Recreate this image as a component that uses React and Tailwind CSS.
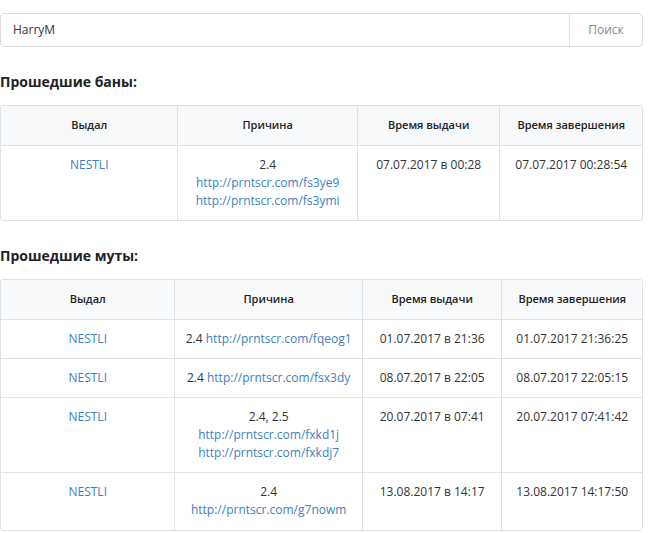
const F = { fontFamily: '"Open Sans", "Noto Sans", sans-serif' };
const L = ({ children }) => <span className="text-[#3c7fc1]">{children}</span>;

function Table({ cols, rows }) {
  return (
    <div className="mr-[9px] border border-[#dee2e6] rounded-[3px] overflow-hidden">
      <div className="flex bg-[#f8f9fa] h-[40px] items-center text-[11px] font-semibold text-[#222] border-b border-[#dee2e6]">
        {["Выдал", "Причина", "Время выдачи", "Время завершения"].map((h, i) => (
          <div key={i} style={{ width: cols[i] }} className={"h-full flex items-center justify-center " + (i < 3 ? "border-r border-[#dee2e6]" : "")}>{h}</div>
        ))}
      </div>
      {rows.map((r, ri) => (
        <div key={ri} style={{ height: r.h }} className={"flex text-[12px] leading-[18px] text-[#333] " + (ri < rows.length - 1 ? "border-b border-[#dee2e6]" : "")}>
          {r.c.map((c, i) => (
            <div key={i} style={{ width: cols[i] }} className={"pt-[10px] text-center " + (i < 3 ? "border-r border-[#dee2e6]" : "")}>{c}</div>
          ))}
        </div>
      ))}
    </div>
  );
}

export default function App() {
  return (
    <div style={F} className="w-[652px] h-[533px] bg-white overflow-hidden pt-[13px]">
      <div className="mr-[9px] h-[34px] flex border border-[#dcdcdc] rounded-[4px] text-[12px]">
        <div className="flex-1 flex items-center pl-[12px] text-[#333]">HarryM</div>
        <div className="w-[73px] border-l border-[#dcdcdc] flex items-center justify-center text-[#888]">Поиск</div>
      </div>
      <div className="mt-[24px] h-[20px] text-[14px] font-bold text-[#222]">Прошедшие баны:</div>
      <div className="mt-[14px]">
        <Table cols={[178, 180, 143, 142]} rows={[
          { h: 74, c: [<L>NESTLI</L>, <><div>2.4</div><div><L>http://prntscr.com/fs3ye9</L></div><div><L>http://prntscr.com/fs3ymi</L></div></>, "07.07.2017 в 00:28", "07.07.2017 00:28:54"] },
        ]} />
      </div>
      <div className="mt-[24px] h-[20px] text-[14px] font-bold text-[#222]">Прошедшие муты:</div>
      <div className="mt-[14px]">
        <Table cols={[175, 188, 140, 140]} rows={[
          { h: 39, c: [<L>NESTLI</L>, <>2.4 <L>http://prntscr.com/fqeog1</L></>, "01.07.2017 в 21:36", "01.07.2017 21:36:25"] },
          { h: 39, c: [<L>NESTLI</L>, <>2.4 <L>http://prntscr.com/fsx3dy</L></>, "08.07.2017 в 22:05", "08.07.2017 22:05:15"] },
          { h: 75, c: [<L>NESTLI</L>, <><div>2.4, 2.5</div><div><L>http://prntscr.com/fxkd1j</L></div><div><L>http://prntscr.com/fxkdj7</L></div></>, "20.07.2017 в 07:41", "20.07.2017 07:41:42"] },
          { h: 57, c: [<L>NESTLI</L>, <><div>2.4</div><div><L>http://prntscr.com/g7nowm</L></div></>, "13.08.2017 в 14:17", "13.08.2017 14:17:50"] },
        ]} />
      </div>
    </div>
  );
}
